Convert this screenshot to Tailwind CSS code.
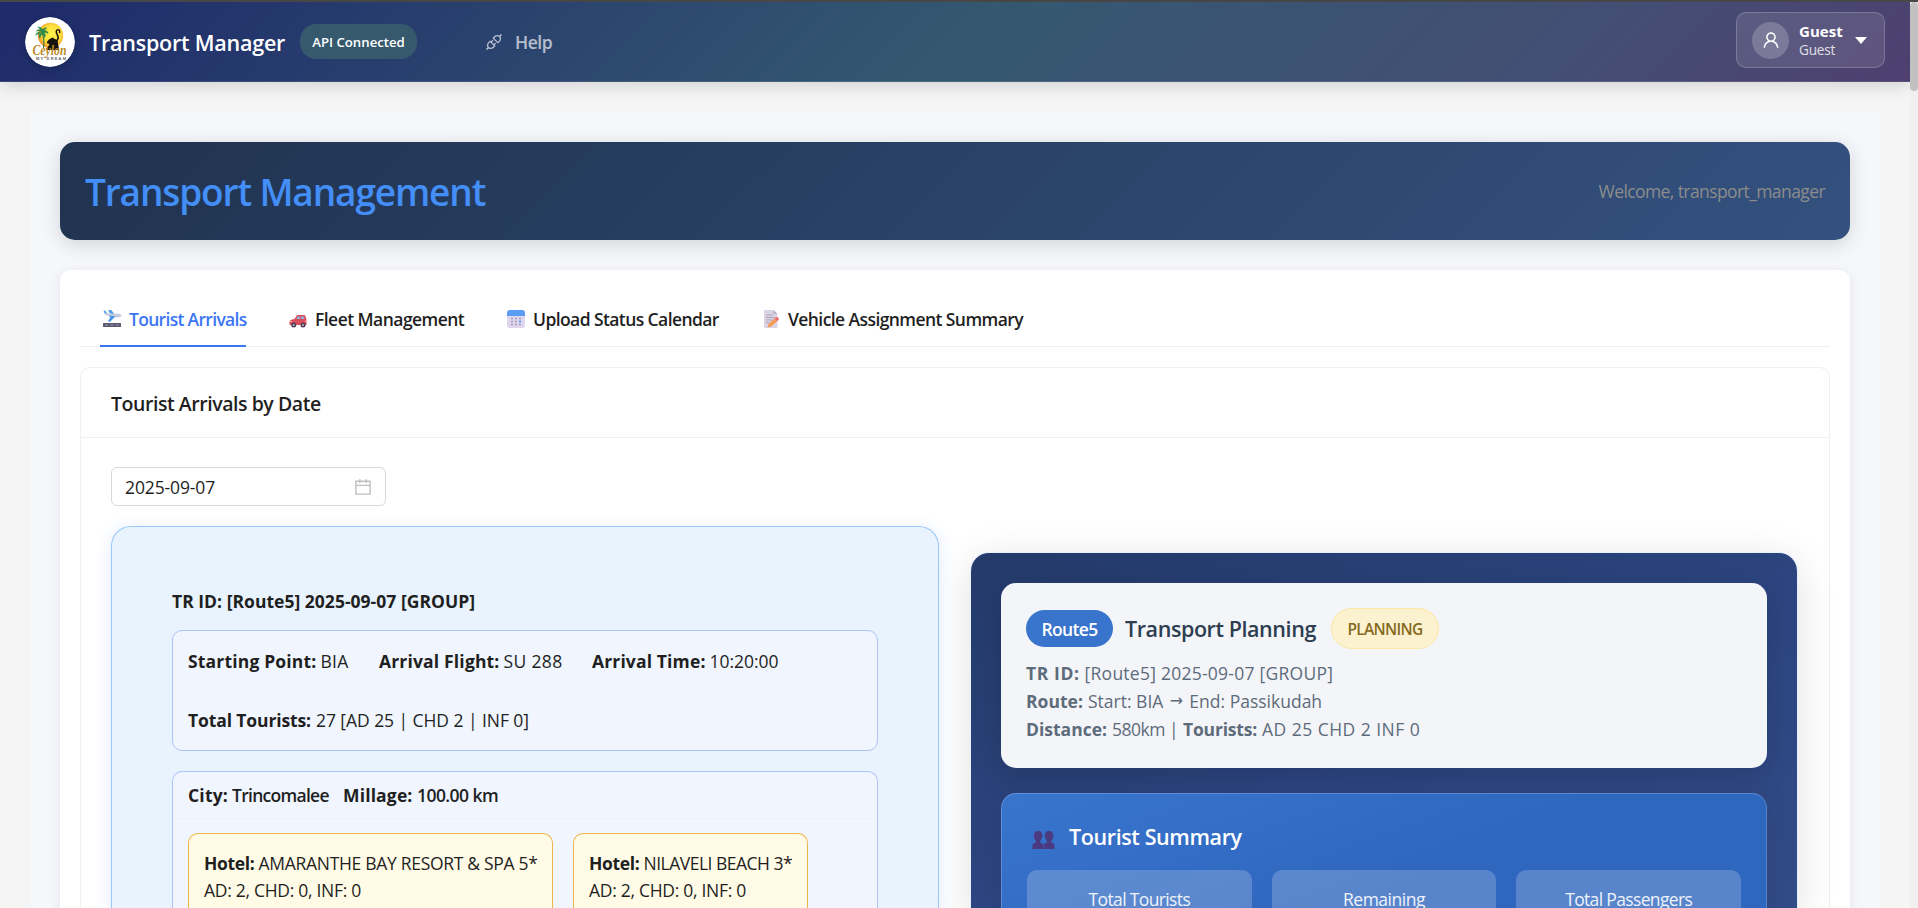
<!DOCTYPE html>
<html lang="en">
<head>
<meta charset="utf-8">
<title>Transport Manager</title>
<script src="https://cdn.jsdelivr.net/npm/@tailwindcss/browser@4"></script>
</head>
<body class="flex h-[908px] w-[1918px] flex-col overflow-hidden bg-[#f5f5f5] font-['Open_Sans','Liberation_Sans',sans-serif] text-[17.5px] leading-7 text-[#1f1f1f]">
<div class="h-0.5 shrink-0 bg-[#474747]"></div>
<div class="flex min-h-0 grow">
<div class="flex w-[1910px] shrink-0 flex-col overflow-hidden">

<!-- Top bar -->
<header class="relative z-10 flex h-20 shrink-0 items-center border-b border-white/10 bg-[linear-gradient(135deg,#1e2a6b_0%,#345870_50%,#444e74_83%,#4e3f70_100%)] bg-origin-border pr-[25px] pl-[25px] text-white shadow-[0_4px_16px_rgba(0,0,0,0.14)]">
  <svg class="size-[50px] shrink-0 rounded-full shadow-[0_2px_8px_rgba(0,0,0,0.2)]" viewBox="0 0 50 50">
    <defs><radialGradient id="sun" cx=".55" cy=".45" r=".6"><stop offset="0" stop-color="#fff04a"/><stop offset=".6" stop-color="#fcdf3c"/><stop offset=".85" stop-color="#f7a52c"/><stop offset="1" stop-color="#ee8a3a"/></radialGradient></defs>
    <circle cx="25" cy="25" r="25" fill="#fff"/>
    <circle cx="25.500" cy="18.500" r="12.700" fill="url(#sun)"/>
    <path d="M17.500 17c-1-3-3.500-4-6-3 1.500-1.500 3.500-1.500 4.500-.5-.5-2-1.800-3-3.200-3.200 2.700-.3 4.300 1 4.800 2.700 1-1.800 2.500-2.300 4-1.800-1.500.5-2.200 1.500-2.500 2.600 2-.5 3.800.8 3.900 2.600-1.400-1.300-2.700-1.400-4-.9 1.500 1.500 1.500 3.500.5 5-.3-2-1-3-2-3.800-1.600 1-2.600 2.600-2.600 4.500-1.400-2-.9-4 .6-5.300-1.800 0-3.400.8-4.500 2.300-.1-2.500 2.800-4 6.500-1.200z" fill="#2d8a4a" stroke="#2d8a4a" stroke-width=".8"/>
    <path d="M17.500 17c1.500 4 1.800 8 1 14" stroke="#3c7a45" stroke-width="1.200" fill="none"/>
    <path d="M34.500 16.200c.8-3.400-1.300-4-2.500-3.200-1.800 1.200-.3 3.500.7 5.500 1 2.300.2 4.200-1 5.500" stroke="#17120e" stroke-width="1.500" fill="none"/>
    <path d="M27.800 20.500l1.400 1.200c2.200.3 3.600 1.600 3.800 4.500.1 2.500.8 3.500 1.200 6.800H21.500c.5-2.600 2.300-3.600 3-6-1-.5-2.500-.3-2.700-1.500.8-2 2.500-3.700 6-5z" fill="#17120e"/>
    <text x="7.500" y="37.500" textLength="34" lengthAdjust="spacingAndGlyphs" font-family="Liberation Serif" font-style="italic" font-weight="700" font-size="14" fill="#b98a26">Ceylon</text>
    <text x="11" y="43.300" textLength="30" font-family="Liberation Sans" font-weight="700" font-size="4" fill="#666">MY DREAM</text>
  </svg>
  <span class="ml-3.5 w-[211px] pt-0.5 text-[21.5px] font-semibold tracking-[-0.22px] whitespace-nowrap">Transport Manager</span>
  <span class="flex h-[35px] w-[117px] items-center justify-center rounded-2xl bg-[#36596e] text-[13.2px] font-semibold whitespace-nowrap">API Connected</span>
  <a class="ml-[67px] flex items-center gap-[11px] text-white/65">
    <svg class="size-5" viewBox="0 0 1024 1024" fill="currentColor"><path d="M917.7 148.8l-42.4-42.4c-1.6-1.6-3.6-2.3-5.7-2.3s-4.1.8-5.7 2.3l-76.1 76.1a199.27 199.27 0 00-112.1-34.3c-51.2 0-102.4 19.5-141.5 58.6L432.3 308.7a8.03 8.03 0 000 11.3L704 591.7c1.6 1.6 3.6 2.3 5.7 2.3 2 0 4.1-.8 5.7-2.3l101.9-101.9c68.9-69 77-175.7 24.3-253.5l76.1-76.1c3.1-3.2 3.1-8.3 0-11.4zM769.1 441.7l-59.4 59.4-186.8-186.8 59.4-59.4c24.9-24.9 58.1-38.7 93.4-38.7 35.3 0 68.4 13.7 93.4 38.7 24.9 24.9 38.7 58.1 38.7 93.4 0 35.3-13.8 68.4-38.7 93.4zm-190.2 105a8.03 8.03 0 00-11.3 0L501 613.3 410.7 523l66.7-66.7c3.1-3.1 3.1-8.2 0-11.3L441 408.6a8.03 8.03 0 00-11.3 0L363 475.3l-43-43a7.85 7.85 0 00-5.7-2.3c-2 0-4.1.8-5.7 2.3L206.8 534.2c-68.9 69-77 175.7-24.3 253.5l-76.1 76.1a8.03 8.03 0 000 11.3l42.4 42.4c1.6 1.6 3.6 2.3 5.7 2.3s4.1-.8 5.7-2.3l76.1-76.1c33.7 22.9 72.9 34.3 112.1 34.3 51.2 0 102.4-19.5 141.5-58.6l101.9-101.9c3.1-3.1 3.1-8.2 0-11.3l-43-43 66.7-66.7c3.1-3.1 3.1-8.2 0-11.3l-36.6-36.2zM441.7 769.1a131.32 131.32 0 01-93.400 38.700c-35.3 0-68.4-13.7-93.4-38.7a131.32 131.32 0 01-38.7-93.4c0-35.3 13.7-68.4 38.7-93.4l59.4-59.4 186.8 186.8-59.4 59.4z"/></svg>
    <span class="font-semibold tracking-[-0.45px]">Help</span>
  </a>
  <div class="mb-[3px] ml-auto flex h-14 w-[149px] items-center rounded-[10px] border border-white/20 bg-white/10 pl-[15px]">
    <span class="flex size-[37px] items-center justify-center rounded-full bg-white/20">
      <svg class="size-5" viewBox="0 0 1024 1024" fill="currentColor"><path d="M858.5 763.6a374 374 0 00-80.6-119.5 375.63 375.63 0 00-119.5-80.6c-.4-.2-.8-.3-1.2-.5C719.5 518 760 444.7 760 362c0-137-111-248-248-248S264 225 264 362c0 82.7 40.5 156 102.8 201.1-.4.2-.8.3-1.2.5-44.8 18.9-85 46-119.5 80.6a375.63 375.63 0 00-80.6 119.5A371.7 371.7 0 00136 901.8a8 8 0 008 8.2h60c4.4 0 7.9-3.5 8-7.8 2-77.2 33-149.5 87.8-204.3 56.7-56.7 132-87.9 212.2-87.9s155.5 31.2 212.2 87.9C779 752.7 810 825 812 902.2c.1 4.4 3.6 7.8 8 7.8h60a8 8 0 008-8.2c-1-47.8-10.9-94.3-29.5-138.2zM512 534c-45.9 0-89.1-17.9-121.6-50.4S340 407.9 340 362c0-45.9 17.9-89.1 50.4-121.6S466.1 190 512 190s89.1 17.9 121.6 50.4S684 316.1 684 362c0 45.900-17.900 89.100-50.400 121.600S557.9 534 512 534z"/></svg>
    </span>
    <span class="ml-2.5 flex w-[55px] flex-col">
      <span class="text-[15px] leading-[19px] font-bold tracking-[0.05px]">Guest</span>
      <span class="text-[13.6px] leading-[18px] tracking-[-0.2px] text-white/80">Guest</span>
    </span>
    <svg class="ml-px h-[7px] w-3" viewBox="0 0 12 7" fill="#fff"><path d="M0 0h12L6 7z"/></svg>
  </div>
</header>

<!-- Page -->
<main class="mx-[30px] mt-[30px] flex grow flex-col bg-[#f5f7fb] px-[30px] pt-[30px]">
  <section class="flex h-[98px] shrink-0 items-center justify-between rounded-[15px] bg-[linear-gradient(135deg,#20334f_0%,#34517f_100%)] px-[25px] shadow-[0_4px_20px_rgba(0,0,0,0.15)]">
    <h1 class="pt-px text-[37px] leading-none font-semibold tracking-[-1.13px] text-[#448ef7]">Transport Management</h1>
    <span class="tracking-[-0.59px] text-[#8c8c8c]">Welcome, transport_manager</span>
  </section>

  <section class="mt-[30px] flex grow flex-col rounded-t-[10px] bg-white px-5 pt-5 shadow-[0_2px_12px_rgba(0,0,0,0.08)]">
    <nav class="flex h-[57px] shrink-0 gap-10 border-b border-[#f0f0f0] pl-5 font-semibold whitespace-nowrap text-[#1f1f1f]">
      <a class="-mb-px flex w-[146px] items-center gap-[7px] border-b-2 border-[#3b76f5] pt-0.5 pl-[3px] tracking-[-0.69px] text-[#3b76f5]">
        <svg class="size-[19px] shrink-0" viewBox="0 0 19 19"><rect y="14" width="18" height="4" rx=".6" fill="#5b5870"/><path d="M2 16h3M7.500 16h3M13 16h3" stroke="#9d9aae" stroke-width="1"/><path d="M5 1l3.500.3 3 4L8 6z" fill="#4d9be8"/><path d="M.3 1.500l2 .2 2 2.600 11 .5c2 .1 3.500 1 3.400 2-.2 1.200-2.500 1.800-5 1.600L4 6.500C2 6 .8 4.500.3 1.500z" fill="#c6cfe2"/><path d="M6 6.500l6.500.8-5.300 5.500-2.400-.4 2.400-4z" fill="#4a96e6"/><path d="M1 1.500l1.500.2L4 4.500l-2.600-.3z" fill="#5aa5ee"/></svg>
        <span>Tourist Arrivals</span>
      </a>
      <a class="ml-[3px] flex w-[175px] items-center gap-2 pt-px tracking-[-0.55px]">
        <svg class="mt-0.5 size-[18px] shrink-0" viewBox="0 0 18 18"><path d="M5.500 8l2-3.200c.3-.5.8-.8 1.400-.8H15c.7 0 1.200.4 1.400 1L17.500 8.500V14H.800c-.5-1.500-.7-3.500.3-4.500C2 8.600 4 8.300 5.500 8z" fill="#dc4e5e"/><path d="M7.200 8l1.500-2.600H11V8zM12 8V5.400h2.500L15.500 8z" fill="#8fb2dd"/><path d="M.8 10.500h2M16 10h1.500" stroke="#f7c9a8" stroke-width="1.200"/><circle cx="4.700" cy="14" r="2.500" fill="#4b3c56"/><circle cx="4.700" cy="14" r="1" fill="#c4bccb"/><circle cx="14" cy="14" r="2.500" fill="#4b3c56"/><circle cx="14" cy="14" r="1" fill="#c4bccb"/></svg>
        <span>Fleet Management</span>
      </a>
      <a class="ml-[3px] flex w-[211px] items-center gap-2 pt-px tracking-[-0.59px]">
        <svg class="size-[18px] shrink-0" viewBox="0 0 18 18"><rect width="18" height="18" rx="3" fill="#ddd6ec"/><path d="M0 6V3a3 3 0 013-3h12a3 3 0 013 3v3z" fill="#5a9df5"/><path d="M4 8.500h2M8 8.500h2M12 8.500h2M4 11.500h2M8 11.500h2M4 14.500h2M8 14.500h2M12 14.500h2" stroke="#a79dbb" stroke-width="1.700"/><path d="M12 11.500h2" stroke="#3f8cf0" stroke-width="1.700"/></svg>
        <span>Upload Status Calendar</span>
      </a>
      <a class="ml-[6px] flex items-center gap-[9px] pt-px tracking-[-0.58px]">
        <svg class="h-[18px] w-[15px] shrink-0" viewBox="0 0 15 18"><path d="M1 0h8.500L13.500 4v13a1 1 0 01-1 1H1a1 1 0 01-1-1V1a1 1 0 011-1z" fill="#dad4e4"/><path d="M9.500 0L13.500 4h-4z" fill="#b5adc2"/><path d="M2 5h7M2 7.500h9M2 10h7M2 12.500h3" stroke="#a79fb8" stroke-width=".9"/><path d="M3.500 17.500l1-3.600 6-5.500 2.600 2.800-6 5.400z" fill="#f39a55"/><path d="M10.500 8.400l1.800-1.300c1.500-.3 2.800 1.200 2.400 2.600l-1.600 1.500z" fill="#ee6a68"/></svg>
        <span>Vehicle Assignment Summary</span>
      </a>
    </nav>

    <div class="mt-5 flex grow flex-col rounded-t-[10px] border border-b-0 border-[#f0f0f0]">
      <h2 class="flex h-[70px] shrink-0 items-center border-b border-[#f0f0f0] px-[30px] pt-0.5 text-[19.5px] font-semibold tracking-[-0.45px]">Tourist Arrivals by Date</h2>
      <div class="flex grow flex-col px-[30px] pt-[29px]">
        <div class="flex h-[39px] w-[275px] shrink-0 items-center justify-between rounded-md border border-[#d9d9d9] pr-3 pl-[13px]">
          <span class="tracking-[-0.13px]">2025-09-07</span>
          <svg class="size-5" viewBox="0 0 1024 1024" fill="#bfbfbf"><path d="M880 184H712v-64c0-4.400-3.600-8-8-8h-56c-4.400 0-8 3.600-8 8v64H384v-64c0-4.400-3.600-8-8-8h-56c-4.400 0-8 3.600-8 8v64H144c-17.700 0-32 14.300-32 32v664c0 17.700 14.300 32 32 32h736c17.700 0 32-14.300 32-32V216c0-17.700-14.300-32-32-32zm-40 656H184V460h656v380zM184 392V256h128v48c0 4.400 3.600 8 8 8h56c4.400 0 8-3.600 8-8v-48h256v48c0 4.400 3.600 8 8 8h56c4.400 0 8-3.600 8-8v-48h128v136H184z"/></svg>
        </div>

        <div class="mt-5 flex grow gap-8">
          <!-- Arrival details -->
          <article class="flex w-[828px] shrink-0 flex-col rounded-t-[20px] border border-b-0 border-[#9bc8fb] bg-[#e8f3fe] px-[60px] pt-[60px] shadow-[0_2px_16px_rgba(60,130,246,0.16)]">
            <h3 class="shrink-0 leading-7 font-bold tracking-[0.02px]">TR ID: [Route5] 2025-09-07 [GROUP]</h3>
            <div class="mt-[15px] h-[121px] shrink-0 rounded-[10px] border border-[#adc4fb] bg-[#f0f5fe] px-[15px] pt-4 whitespace-nowrap">
              <div class="flex">
                <p class="flex w-[191px] gap-1"><b class="tracking-[0.17px]">Starting Point:</b><span class="tracking-[0.3px]">BIA</span></p>
                <p class="flex w-[213px] gap-1"><b class="tracking-[0.17px]">Arrival Flight:</b><span class="tracking-[0.35px]">SU 288</span></p>
                <p class="flex gap-1"><b class="tracking-[0.14px]">Arrival Time:</b><span class="tracking-[-0.03px]">10:20:00</span></p>
              </div>
              <p class="mt-[31px] flex gap-[5px]"><b class="tracking-[-0.12px]">Total Tourists:</b><span class="tracking-[-0.06px]">27 [AD 25 | CHD 2 | INF 0]</span></p>
            </div>
            <div class="mt-5 flex grow flex-col rounded-t-[10px] border border-b-0 border-[#adc4fb] bg-[#f0f5fe] whitespace-nowrap">
              <div class="flex h-[47px] shrink-0 items-center border-b border-[#f0f0f0] px-[15px] font-semibold">
                <b class="w-11 font-bold tracking-[0.2px]">City:</b><span class="w-[111px] tracking-[-0.72px]">Trincomalee</span><b class="w-[74px] font-bold tracking-[0.15px]">Millage:</b><span class="tracking-[-0.55px]">100.00 km</span>
              </div>
              <div class="flex grow gap-5 px-[15px] pt-3.5 leading-[27px]">
                <div class="w-[365px] rounded-t-[10px] border border-b-0 border-[#f0b54a] bg-[#fffbe6] px-[15px] pt-4">
                  <p class="flex gap-1"><b class="tracking-[-0.33px]">Hotel:</b><span class="tracking-[-0.3px]">AMARANTHE BAY RESORT &amp; SPA 5*</span></p>
                  <p class="tracking-[-0.29px]">AD: 2, CHD: 0, INF: 0</p>
                </div>
                <div class="w-[235px] rounded-t-[10px] border border-b-0 border-[#f0b54a] bg-[#fffbe6] px-[15px] pt-4">
                  <p class="flex gap-1"><b class="tracking-[-0.33px]">Hotel:</b><span class="tracking-[-0.51px]">NILAVELI BEACH 3*</span></p>
                  <p class="tracking-[-0.29px]">AD: 2, CHD: 0, INF: 0</p>
                </div>
              </div>
            </div>
          </article>

          <!-- Route planning -->
          <article class="mt-[27px] flex w-[826px] shrink-0 flex-col rounded-t-[18px] bg-[linear-gradient(160deg,#243a6a_0%,#2d4682_55%,#324c88_100%)] px-[30px] pt-[30px] shadow-[0_0_0_1px_#e4f1fe,0_8px_40px_rgba(0,0,0,0.13)]">
            <div class="h-[185px] shrink-0 rounded-[15px] bg-[#f4f5f9] pt-[25px] pl-[25px] whitespace-nowrap text-[#5d6b7b] shadow-[0_8px_30px_rgba(0,0,0,0.16)]">
              <div class="flex h-[41px] items-center">
                <span class="flex h-[37px] w-[87px] items-center justify-center rounded-full bg-[#3873cc] pt-px font-semibold tracking-[-0.66px] text-white">Route5</span>
                <span class="ml-3 w-[206px] text-[21.5px] font-semibold tracking-[-0.42px] text-[#2c3e50]">Transport Planning</span>
                <span class="flex h-[41px] w-[108px] items-center justify-center rounded-full border border-[#fbe7a6] bg-[#fdf2cf] text-[15.5px] font-semibold tracking-[-0.7px] text-[#856a1e]">PLANNING</span>
              </div>
              <div class="mt-2.5">
                <p class="flex gap-[5px]"><b class="tracking-[0.6px]">TR ID:</b><span class="tracking-[0.25px]">[Route5] 2025-09-07 [GROUP]</span></p>
                <p class="flex gap-[5px]"><b class="tracking-[0.03px]">Route:</b><span class="flex"><span>Start: BIA</span><span class="w-[26px] text-center font-['DejaVu_Sans',sans-serif] text-[16px]">→</span><span>End: Passikudah</span></span></p>
                <p class="flex gap-[5px]"><b>Distance:</b><span class="tracking-[-0.51px]">580km |</span><b class="tracking-[-0.19px]">Tourists:</b><span class="tracking-[0.46px]">AD 25 CHD 2 INF 0</span></p>
              </div>
            </div>
            <div class="mt-[25px] flex grow flex-col rounded-t-[15px] border border-b-0 border-white/20 bg-[linear-gradient(160deg,#3975cd_0%,#2f66be_60%)] bg-origin-border px-[25px] pt-[29px] text-white shadow-[0_8px_30px_rgba(0,0,0,0.1)]">
              <h3 class="flex h-7 shrink-0 items-center pl-[5px] text-[21.5px] font-semibold tracking-[-0.39px]">
                <svg class="mt-[5px] mr-3.5 h-[18px] w-[23px]" viewBox="0 0 22 18"><g fill="#4c3a80"><path d="M5.500 0C8.500 0 9.800 1.800 9.700 4c.5.500.4 2-.3 2.500-.3 1.500-.9 2.500-1.600 3.300v1.900c1.500.3 3 .9 3 2.800V18H0v-3.500c0-1.900 1.700-2.500 3.400-2.800V9.800C2.600 9 2.100 8 1.800 6.500c-.7-.5-.8-2-.3-2.500C1.400 1.800 2.500 0 5.500 0z"/><path d="M16.500 0c3 0 4.300 1.800 4.200 4 .5.500.4 2-.3 2.500-.3 1.500-.9 2.500-1.600 3.300v1.900c1.600.3 3.200.9 3.200 2.800V18H11.200v-3.500c0-1.900 1.500-2.500 3.200-2.800V9.800c-.8-.8-1.300-1.800-1.600-3.300-.7-.5-.8-2-.3-2.500-.1-2.200 1-4 4-4z"/></g></svg>
                Tourist Summary
              </h3>
              <div class="mt-[19px] grid grow grid-cols-3 gap-5 text-center text-white/90">
                <div class="rounded-t-[10px] bg-white/20 pt-[15px] tracking-[-0.64px]">Total Tourists</div>
                <div class="rounded-t-[10px] bg-white/20 pt-[15px] tracking-[-0.48px]">Remaining</div>
                <div class="rounded-t-[10px] bg-white/20 pt-[15px] tracking-[-0.65px]">Total Passengers</div>
              </div>
            </div>
          </article>
        </div>
      </div>
    </div>
  </section>
</main>
</div>

<!-- Scrollbar -->
<div class="w-2 bg-[#f0f0f0]"><div class="h-[89px] w-2 rounded bg-[#c1c1c1]"></div></div>
</div>
</body>
</html>
